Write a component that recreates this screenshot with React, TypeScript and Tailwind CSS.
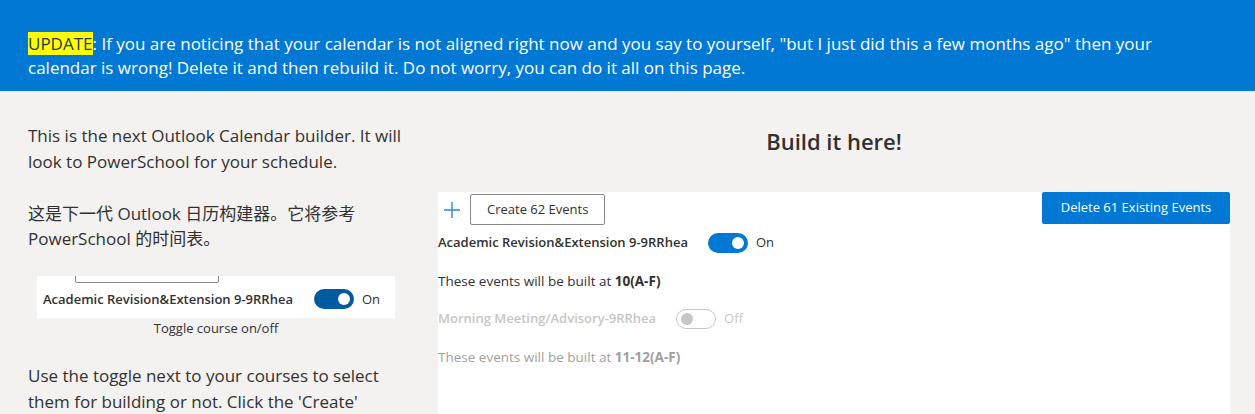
import React from 'react';

const font = { fontFamily: '"Open Sans", "Noto Sans CJK SC", sans-serif' };

interface ToggleProps {
  on: boolean;
  disabled?: boolean;
  dark?: boolean;
}

const Toggle: React.FC<ToggleProps> = ({ on, disabled, dark }) => {
  if (!on) {
    return (
      <div className={`w-10 h-5 rounded-full border flex items-center px-[4px] ${disabled ? 'border-[#c8c6c4]' : 'border-[#605e5c]'}`}>
        <div className={`w-3 h-3 rounded-full ${disabled ? 'bg-[#c8c6c4]' : 'bg-[#605e5c]'}`} />
      </div>
    );
  }
  return (
    <div className={`w-10 h-5 rounded-full flex items-center justify-end px-[4px] ${dark ? 'bg-[#005a9e]' : 'bg-[#0078d4]'}`}>
      <div className="w-3 h-3 rounded-full bg-white" />
    </div>
  );
};

interface CourseRowProps {
  name: string;
  on: boolean;
  period: string;
}

const CourseRow: React.FC<CourseRowProps> = ({ name, on, period }) => {
  const disabled = !on;
  return (
    <div>
      <div className="flex items-center h-[38px]">
        <span className={`text-[13px] font-semibold ${disabled ? 'text-[#c8c6c4]' : 'text-[#323130]'}`}>{name}</span>
        <div className="ml-5">
          <Toggle on={on} disabled={disabled} />
        </div>
        <span className={`ml-2 text-[13px] ${disabled ? 'text-[#c8c6c4]' : 'text-[#323130]'}`}>{on ? 'On' : 'Off'}</span>
      </div>
      <p className={`h-[38px] flex items-center text-[13.5px] ${disabled ? 'text-[#a19f9d]' : 'text-[#323130]'}`}>
        <span>
          These events will be built at <b>{period}</b>
        </span>
      </p>
    </div>
  );
};

export default function App() {
  return (
    <div className="min-h-screen bg-[#f3f2f1] text-[#323130]" style={font}>
      {/* Banner */}
      <div className="bg-[#0078d4] text-white pl-[28px] pr-[60px] pt-[32px] pb-[11px] text-[17px] leading-[24px]">
        <span className="bg-[#ffff00] text-[#1f3b5c]">UPDATE</span>: If you are noticing that your calendar is not aligned right now and you say to yourself, "but I just did this a few months ago" then your calendar is wrong! Delete it and then rebuild it. Do not worry, you can do it all on this page.
      </div>

      <div className="flex gap-[28px] pl-[28px] pr-[25px] pt-[32px]">
        {/* Left column */}
        <div className="w-[382px] shrink-0 text-[17px] leading-[26px] text-[#323130]">
          <p>This is the next Outlook Calendar builder. It will look to PowerSchool for your schedule.</p>
          <p className="mt-[26px] leading-[25px]">这是下一代 Outlook 日历构建器。它将参考 PowerSchool 的时间表。</p>

          <div className="mt-[25px] flex flex-col items-center w-[376px]">
            <div className="w-[358px] h-[42px] bg-white relative overflow-hidden">
              <div className="absolute left-[38px] top-[-20px] w-[144px] h-[27px] border border-[#8a8886] rounded-[2px]" />
              <div className="flex items-center h-full pt-[4px] pl-[6px]">
                <span className="text-[13px] font-semibold text-[#323130]">Academic Revision&amp;Extension 9-9RRhea</span>
                <div className="ml-[21px]">
                  <Toggle on dark />
                </div>
                <span className="ml-2 text-[13px]">On</span>
              </div>
            </div>
            <div className="text-[13px] leading-5">Toggle course on/off</div>
          </div>

          <p className="mt-[25px]">Use the toggle next to your courses to select them for building or not. Click the 'Create' button to build your calendar.</p>
        </div>

        {/* Right column */}
        <div className="flex-1 min-w-0">
          <h2 className="text-center text-[22px] font-semibold leading-[30px] mt-[3px] text-[#323130]">Build it here!</h2>
          <div className="mt-[36px] bg-white h-[400px]">
            <div className="flex items-start justify-between h-[30px]">
              <div className="flex items-center pt-[2px]">
                <svg width="32" height="30" viewBox="0 0 32 30" className="text-[#2b88d8]">
                  <path d="M14 7v16M6 15h16" stroke="currentColor" strokeWidth="1.4" fill="none" />
                </svg>
                <button className="h-[31px] px-4 border border-[#8a8886] rounded-[2px] text-[13px] text-[#323130] bg-white">Create 62 Events</button>
              </div>
              <button className="h-8 w-[188px] bg-[#0078d4] rounded-[2px] text-[13px] text-white">Delete 61 Existing Events</button>
            </div>
            <div className="pt-[2px]">
              <CourseRow name="Academic Revision&Extension 9-9RRhea" on period="10(A-F)" />
              <CourseRow name="Morning Meeting/Advisory-9RRhea" on={false} period="11-12(A-F)" />
            </div>
          </div>
        </div>
      </div>
    </div>
  );
}
